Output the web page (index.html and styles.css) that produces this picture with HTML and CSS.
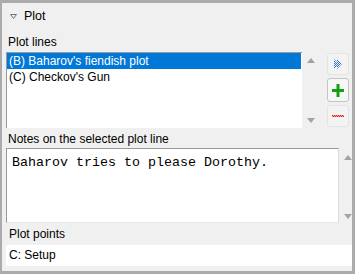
FILE: index.html
```html
<!DOCTYPE html>
<html lang="en">
<head>
    <meta charset="UTF-8">
    <title>Plot</title>
    <link rel="stylesheet" href="styles.css">
</head>
<body>
    <div class="panel">
        <div class="panel-head">
            <svg class="twisty" width="7" height="5" viewBox="0 0 7 5">
                <polygon points="0.5,0.5 6.5,0.5 3.5,4.5" fill="none" stroke="#707088" stroke-width="1"/>
            </svg>
            <span class="title">Plot</span>
        </div>

        <div class="field-label">Plot lines</div>
        <div class="lines-row">
            <div class="listbox">
                <ul class="items">
                    <li class="item selected">(B) Baharov's fiendish plot</li>
                    <li class="item">(C) Checkov's Gun</li>
                </ul>
                <div class="vscroll">
                    <span class="arrow up"></span>
                    <span class="arrow down"></span>
                </div>
            </div>
            <div class="tools">
                <button class="tool" title="Move">
                    <svg width="9" height="10" viewBox="0 0 9 10">
                        <defs>
                            <pattern id="dots" width="2" height="2" patternUnits="userSpaceOnUse">
                                <rect x="0" y="0" width="1" height="1" fill="#2f6fd8"/>
                                <rect x="1" y="1" width="1" height="1" fill="#2f6fd8"/>
                            </pattern>
                        </defs>
                        <polygon points="0,0 5,5 0,10" fill="url(#dots)"/>
                        <polygon points="3,0 8,5 3,10" fill="url(#dots)"/>
                    </svg>
                </button>
                <button class="tool focused" title="Add">
                    <svg width="12" height="13" viewBox="0 0 12 13">
                        <rect x="4.5" y="0" width="3" height="13" fill="#12a012"/>
                        <rect x="0" y="5" width="12" height="3" fill="#12a012"/>
                    </svg>
                </button>
                <button class="tool" title="Remove">
                    <svg width="12" height="2" viewBox="0 0 12 2">
                        <defs>
                            <pattern id="reddots" width="2" height="2" patternUnits="userSpaceOnUse">
                                <rect x="0" y="0" width="1" height="1" fill="#e02020"/>
                                <rect x="1" y="1" width="1" height="1" fill="#e02020"/>
                            </pattern>
                        </defs>
                        <rect x="0" y="0" width="12" height="2" fill="#f4a0a0"/>
                        <rect x="0" y="0" width="12" height="2" fill="url(#reddots)"/>
                    </svg>
                </button>
            </div>
        </div>

        <div class="field-label notes-label">Notes on the selected plot line</div>
        <div class="notes-row">
            <div class="notes">Baharov tries to please Dorothy.</div>
            <div class="vscroll notes-scroll">
                <span class="arrow up"></span>
                <span class="arrow down"></span>
            </div>
        </div>

        <div class="band">Plot points</div>
        <div class="point-row">C: Setup</div>
    </div>
</body>
</html>
```

FILE: styles.css
```css
body {
    margin: 0;
    font-family: "Liberation Sans", Arial, sans-serif;
    font-size: 12px;
    color: #000;
    background-color: #fff;
}

.panel {
    width: 355px;
    height: 274px;
    box-sizing: border-box;
    border-style: solid;
    border-color: #ababab;
    border-width: 3px 3px 3px 2px;
    background-color: #f0f0f0;
    padding-left: 4px;
    overflow: hidden;
}

.panel-head {
    height: 26px;
    display: flex;
    align-items: center;
    padding-left: 4px;
}

.twisty {
    margin-right: 7px;
    margin-top: 1px;
}

.title {
    font-size: 12.5px;
}

.field-label {
    margin-top: 5px;
    height: 16px;
    line-height: 16px;
    padding-left: 2px;
}

.lines-row {
    margin-top: 2px;
    height: 76px;
    display: flex;
}

.listbox {
    width: 314px;
    display: flex;
}

.items {
    list-style: none;
    margin: 0;
    padding: 0;
    width: 296px;
    box-sizing: border-box;
    background-color: #fff;
    border-top: 1px solid #9a9a9a;
    border-left: 1px solid #9a9a9a;
}

.item {
    height: 16px;
    line-height: 16px;
    padding-left: 2px;
    margin-right: 1px;
}

.item.selected {
    background-color: #0078d7;
    color: #fff;
}

.vscroll {
    flex: 1;
    display: flex;
    flex-direction: column;
    justify-content: space-between;
    align-items: center;
    padding: 6px 0 5px;
}

.arrow {
    width: 0;
    height: 0;
    border-left: 4px solid transparent;
    border-right: 4px solid transparent;
}

.arrow.up {
    border-bottom: 5px solid #a3a3a3;
}

.arrow.down {
    border-top: 5px solid #a3a3a3;
}

.tools {
    margin-left: 7px;
    display: flex;
    flex-direction: column;
    gap: 3px;
    padding-top: 1px;
}

.tool {
    width: 22px;
    height: 22px;
    padding: 0;
    display: flex;
    align-items: center;
    justify-content: center;
    background-color: #f3f3f3;
    border: 1px solid #e4e4e4;
    border-radius: 3px;
}

.tool.focused {
    height: 24px;
    background-color: #f7f7f7;
    border-color: #c4c4c4;
}

.notes-label {
    margin-top: 3px;
}

.notes-row {
    margin-top: 1px;
    height: 75px;
    display: flex;
}

.notes {
    width: 333px;
    box-sizing: border-box;
    background-color: #fff;
    border-top: 1px solid #9a9a9a;
    border-left: 1px solid #9a9a9a;
    border-right: 1px solid #dcdcdc;
    border-bottom: 1px solid #e8e8e8;
    padding: 6px 5px;
    font-family: "Liberation Mono", "Courier New", monospace;
    font-size: 13.33px;
    line-height: 16px;
}

.notes-scroll {
    padding: 7px 0 4px 5px;
}

.band {
    height: 22px;
    line-height: 22px;
    padding-left: 3px;
}

.point-row {
    height: 21px;
    line-height: 21px;
    padding-left: 3px;
    background-color: #fff;
}
```
